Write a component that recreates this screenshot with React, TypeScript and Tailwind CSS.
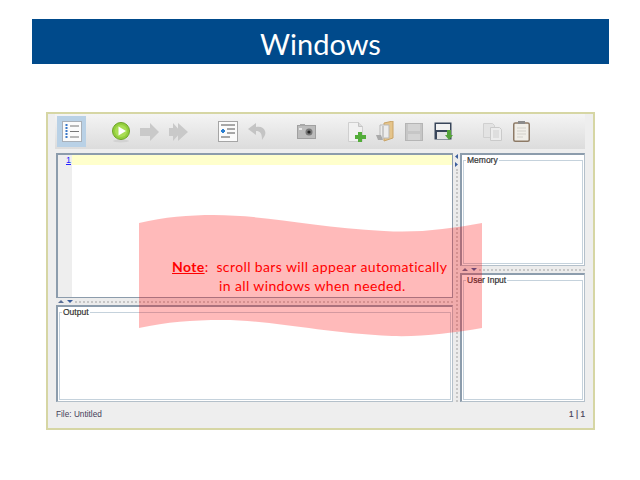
import React from "react";

const uiFont = "font-['Liberation_Sans',Arial,sans-serif]";

function ListIcon() {
  return (
    <svg width="20" height="21" viewBox="0 0 20 21">
      <rect x="0.5" y="0.5" width="19" height="20" fill="#fbfbfb" stroke="#a9b0b8" />
      <path d="M4.5 3v15" stroke="#3a78c8" strokeWidth="2" strokeDasharray="2 1" />
      <path d="M8 5h9M8 10.5h9M8 16h9" stroke="#777" strokeWidth="1" />
    </svg>
  );
}

function PlayIcon() {
  return (
    <svg width="20" height="22" viewBox="0 0 20 22">
      <ellipse cx="10" cy="20" rx="8" ry="1.5" fill="#d2d2d2" />
      <circle cx="10" cy="10" r="8.5" fill="#93cf3c" stroke="#6da329" />
      <circle cx="10" cy="10" r="6" fill="#a9dd55" />
      <path d="M7.5 5.5 15 10l-7.5 4.5z" fill="#fff" />
    </svg>
  );
}

function ArrowIcon({ double }: { double?: boolean }) {
  return (
    <svg width="20" height="18" viewBox="0 0 20 18">
      {double ? (
        <path d="M0 5h4V0l8 9-8 9v-5H0zM9 0l10 9-10 9z" fill="#c9c9c9" />
      ) : (
        <path d="M0 5h10V0l9 9-9 9v-5H0z" fill="#c9c9c9" />
      )}
    </svg>
  );
}

function IndentIcon() {
  return (
    <svg width="20" height="21" viewBox="0 0 20 21">
      <rect x="0.5" y="0.5" width="19" height="20" fill="#fbfbfb" stroke="#a5a5a5" />
      <path d="M3 4h14M9 8h8M9 12h8M3 16h9" stroke="#555" />
      <path d="M3 10h4M5 8v4" stroke="#2b7fd0" strokeWidth="2" />
    </svg>
  );
}

function UndoIcon() {
  return (
    <svg width="18" height="19" viewBox="0 0 18 19">
      <path d="M8 1 0 7l8 6V9c4 0 6 2 6 9 3-4 4-6 3-9-1-3-4-5-9-4z" fill="#c4c4c4" />
    </svg>
  );
}

function CameraIcon() {
  return (
    <svg width="19" height="15" viewBox="0 0 19 15">
      <rect x="0.5" y="1.5" width="18" height="13" fill="#bcbcbc" stroke="#a0a0a0" />
      <rect x="3" y="0" width="5" height="2" fill="#a8a8a8" />
      <circle cx="12" cy="8" r="3.5" fill="#777" />
      <circle cx="12" cy="8" r="1.6" fill="#222" />
      <rect x="2" y="4" width="3" height="2" fill="#e8e8e8" />
    </svg>
  );
}

function NewFileIcon() {
  return (
    <svg width="18" height="20" viewBox="0 0 18 20">
      <path d="M0.5 0.5h10l4 4v15H0.5z" fill="#f1f1f1" stroke="#cfcfcf" />
      <path d="M10.5 0.5v4h4" fill="#dcdcdc" stroke="#c4c4c4" />
      <path d="M10 10h4v3h4v4h-4v3h-4v-3H7v-4h3z" fill="#53ad3a" />
    </svg>
  );
}

function OpenIcon() {
  return (
    <svg width="18" height="21" viewBox="0 0 18 21">
      <path d="M8 2 17 0v17l-9 3z" fill="#e5c48a" stroke="#c9a468" />
      <path d="M4 4h9v13H4z" fill="#ececec" stroke="#b9b9b9" />
      <path d="M0 14h5l2 5H2z" fill="#a9a9a9" />
      <path d="M6 5h2v12H6z" fill="#c8c8c8" />
    </svg>
  );
}

function SaveIcon({ disabled }: { disabled?: boolean }) {
  if (disabled) {
    return (
      <svg width="18" height="18" viewBox="0 0 18 18">
        <rect x="0.5" y="0.5" width="17" height="17" fill="#c6c6c6" stroke="#b5b5b5" />
        <rect x="3" y="1" width="12" height="7" fill="#d4d4d4" />
        <rect x="3" y="11" width="12" height="6" fill="#d4d4d4" />
      </svg>
    );
  }
  return (
    <svg width="19" height="19" viewBox="0 0 19 19">
      <rect x="0.5" y="0.5" width="17" height="17" fill="#39465a" />
      <rect x="2" y="2" width="14" height="6" fill="#f2f2f2" />
      <rect x="3" y="10" width="12" height="7" fill="#e4e4e4" />
      <path d="M13 8h4v5h2l-4 5-4-5h2z" fill="#55a33a" />
    </svg>
  );
}

function CopyIcon() {
  return (
    <svg width="19" height="18" viewBox="0 0 19 18">
      <path d="M0.5 0.5h9l2 2v12H0.5z" fill="#e3e3e3" stroke="#d0d0d0" />
      <path d="M7.5 4.5h9l2 2v11h-11z" fill="#ececec" stroke="#cacaca" />
      <path d="M10 8h6M10 10h6M10 12h6M10 14h6" stroke="#d0d0d0" />
    </svg>
  );
}

function PasteIcon() {
  return (
    <svg width="17" height="21" viewBox="0 0 17 21">
      <rect x="0.75" y="2" width="15.5" height="18.25" rx="1.5" fill="#f0eee8" stroke="#8d7a66" strokeWidth="1.5" />
      <rect x="5" y="0" width="7" height="3" fill="#8b8b8b" />
      <path d="M4 7h9M4 10h9M4 13h9M4 16h6" stroke="#d2d0ca" />
    </svg>
  );
}

function SplitArrows({ vertical }: { vertical?: boolean }) {
  if (vertical) {
    return (
      <svg width="5" height="15" viewBox="0 0 5 15" className="block">
        <path d="M4 1v5L1 3.5z" fill="#3c5f9c" />
        <path d="M1 9v5l3-2.5z" fill="#3c5f9c" />
      </svg>
    );
  }
  return (
    <svg width="17" height="5" viewBox="0 0 17 5" className="shrink-0 block">
      <path d="M1 4h6L4 1z" fill="#5a6f96" />
      <path d="M10 1h6l-3 3z" fill="#3c5f9c" />
    </svg>
  );
}

// painel com borda e título
function TitledPane({ title, className }: { title: string; className: string }) {
  return (
    <div className={`${className} bg-white border-t-2 border-l-2 border-r border-b border-t-[#8c9cac] border-l-[#8c9cac] border-r-[#b4c0ca] border-b-[#b4c0ca] pt-[1px] pl-[1px] pr-[1px] pb-[1px]`}>
      <fieldset className="h-full border border-[#c5d2dc] pl-[2px] min-w-0">
        <legend className={`${uiFont} px-[1px] text-[8.5px] leading-[9px] text-[#333] [-webkit-text-stroke:0.2px_#333]`}>
          {title}
        </legend>
      </fieldset>
    </div>
  );
}

function HDivider() {
  return (
    <div className="h-[7px] flex items-center pl-[1px] gap-[1px] bg-[#ececec]">
      <SplitArrows />
      <div className="flex-1 border-t-2 border-dotted border-[#c6c6c6]" />
    </div>
  );
}

export default function App() {
  return (
    <div className="relative w-[640px] h-[480px] bg-white overflow-hidden">
      <div className="pt-[19px] px-[32px] pr-[31px]">
        <h1 className="h-[45px] pt-[5px] bg-[#004a8b] flex items-center justify-center text-white text-[29px] font-['Lato',sans-serif] font-normal">
          Windows
        </h1>
      </div>

      {/* janela do programa */}
      <div className={`${uiFont} ml-[46px] mt-[48px] w-[549px] h-[318px] bg-[#eeeeee] border-2 border-[#d6d6a4] flex flex-col pl-[7px] pr-[8px]`}>
        <div className="h-[35px] shrink-0 flex items-center bg-gradient-to-b from-[#f4f4f4] to-[#dcdcdc]">
          <div className="ml-[2px] w-[29px] h-[31px] bg-[#b9d1e6] flex items-center justify-center">
            <ListIcon />
          </div>
          <div className="ml-[25px] flex"><PlayIcon /></div>
          <div className="ml-[9px] flex"><ArrowIcon /></div>
          <div className="ml-[9px] flex"><ArrowIcon double /></div>
          <div className="ml-[29px] flex"><IndentIcon /></div>
          <div className="ml-[10px] flex"><UndoIcon /></div>
          <div className="ml-[31px] flex"><CameraIcon /></div>
          <div className="ml-[32px] flex"><NewFileIcon /></div>
          <div className="ml-[10px] flex"><OpenIcon /></div>
          <div className="ml-[11px] flex"><SaveIcon disabled /></div>
          <div className="ml-[11px] flex"><SaveIcon /></div>
          <div className="ml-[30px] flex"><CopyIcon /></div>
          <div className="ml-[11px] flex"><PasteIcon /></div>
        </div>

        <div className="mt-[4px] h-[249px] shrink-0 flex ml-[1px]">
          <div className="w-[397px] flex flex-col">
            <div className="h-[145px] bg-white border-t-2 border-l-2 border-r border-b border-[#8c9cac] flex">
              <div className="w-[14px] bg-[#eeeeee] text-right text-[9px] leading-[10px] text-[#2222ff] pr-[1px]">
                <span className="underline">1</span>
              </div>
              <div className="flex-1">
                <div className="h-[10px] bg-[#ffffcc]" />
              </div>
            </div>
            <HDivider />
            <TitledPane title="Output" className="h-[97px]" />
          </div>

          <div className="w-[7px] flex flex-col items-center bg-[#ececec]">
            <div className="pb-[1px]"><SplitArrows vertical /></div>
            <div className="flex-1 border-l-2 border-dotted border-[#c6c6c6]" />
          </div>

          <div className="w-[125px] flex flex-col">
            <TitledPane title="Memory" className="h-[113px]" />
            <HDivider />
            <TitledPane title="User Input" className="h-[129px]" />
          </div>
        </div>

        <div className="flex-1 flex items-center justify-between text-[8.25px] text-[#454058]">
          <span className="ml-[1px]">File: Untitled</span>
          <span className="[-webkit-text-stroke:0.2px_#454058]">1 | 1</span>
        </div>
      </div>

      {/* nota por cima da janela */}
      <svg className="absolute left-[139px] top-[215px]" width="343" height="122" viewBox="0 0 343 122">
        <path
          d="M0 8C25 2 50 0 75 0c50 0 100 12 170 16 35 2 65-2 98-8v105c-30 5-60 9-90 8-70-3-120-16-170-16-30 0-55 2-83 8z"
          fill="#ff0000"
          fillOpacity="0.27"
        />
      </svg>
      <div className="absolute left-[139px] top-[257px] w-[343px] pl-[33px] font-['Lato',sans-serif] text-[14px] leading-[19px] text-[#ff0000] tracking-[0.38px]">
        <p className="whitespace-nowrap">
          <strong className="underline">Note</strong>:&nbsp; scroll bars will appear automatically
        </p>
        <p className="whitespace-nowrap pl-[47px]">in all windows when needed.</p>
      </div>
    </div>
  );
}
